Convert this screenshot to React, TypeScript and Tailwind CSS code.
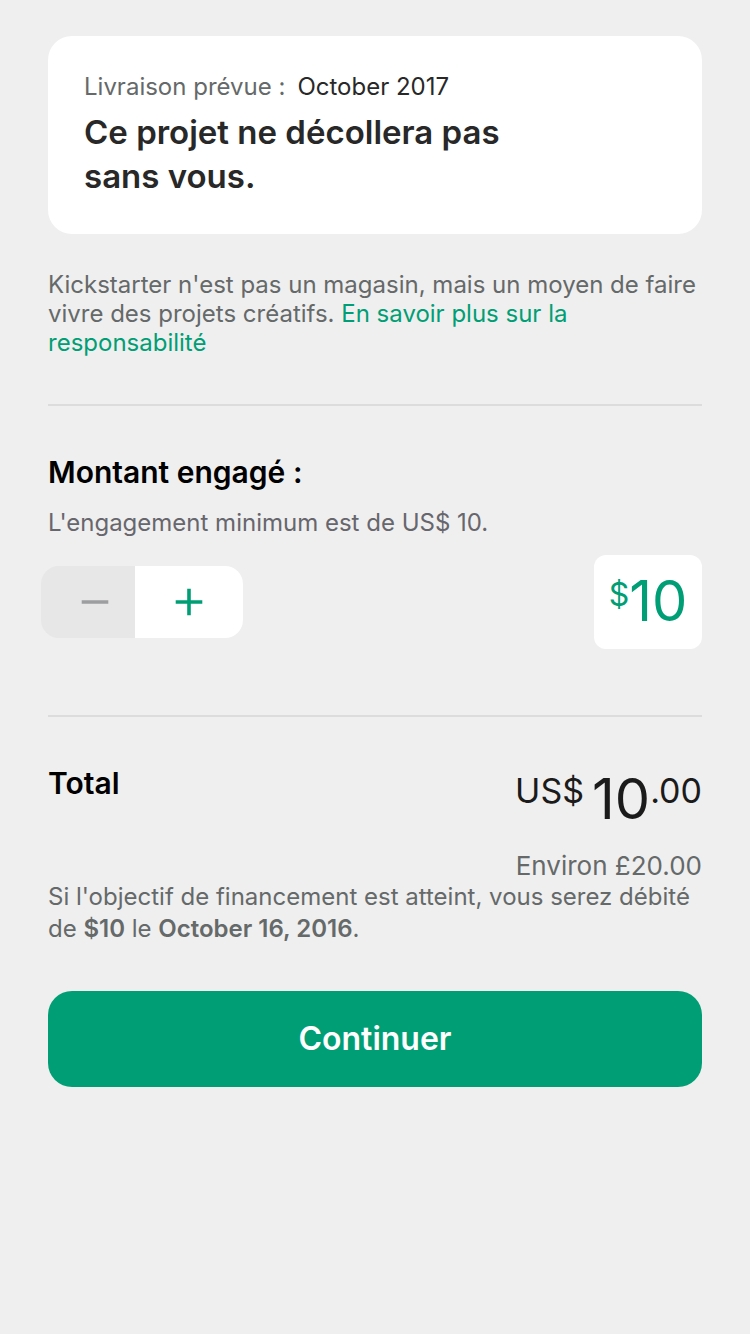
import { useState } from "react";

const MINIMUM = 10;

export default function App() {
  const [amount, setAmount] = useState(MINIMUM);
  return (
    <main className="min-h-screen bg-[#efefef] px-12 pt-9 pb-12 font-['Inter','Liberation_Sans',sans-serif] text-2xl text-[#656969]">
      <section className="rounded-3xl bg-white px-9 pt-9 pb-9">
        <p className="leading-[30px]">
          Livraison prévue :<span className="ml-3 text-[#282828]">October 2017</span>
        </p>
        <h1 className="mt-2 max-w-[440px] text-[33px] leading-[44px] font-semibold text-[#282828]">
          Ce projet ne décollera pas sans vous.
        </h1>
      </section>

      <p className="mt-9 leading-[29px]">
        Kickstarter n'est pas un magasin, mais un moyen de faire vivre des projets créatifs.{" "}
        <a href="#" className="text-[#009e74]">En savoir plus sur la responsabilité</a>
      </p>

      <hr className="mt-[47px] border-t-2 border-[#dcdcdc]" />

      <section className="pt-12">
        <h2 className="text-[30px] leading-[36px] font-semibold text-black">Montant engagé :</h2>
        <p className="mt-[18px] leading-[29px] text-[#67666d]">L'engagement minimum est de US$ 10.</p>
        <div className="mt-[18px] flex items-center justify-between">
          <div className="-ml-[7px] flex h-[72px] overflow-hidden rounded-[18px]">
            <button
              type="button"
              aria-label="Diminuer"
              disabled={amount <= MINIMUM}
              onClick={() => setAmount(amount - 1)}
              className="flex w-[94px] items-center justify-center bg-[#e7e7e7] pl-[14px] text-[#9c9ea0]"
            >
              <svg width="28" height="28" viewBox="0 0 28 28" fill="none" stroke="currentColor" strokeWidth="3.6">
                <path d="M0.7 14H27.3" />
              </svg>
            </button>
            <button
              type="button"
              aria-label="Augmenter"
              onClick={() => setAmount(amount + 1)}
              className="flex w-[108px] items-center justify-center bg-white text-[#009e74]"
            >
              <svg width="28" height="28" viewBox="0 0 28 28" fill="none" stroke="currentColor" strokeWidth="3.6">
                <path d="M0.7 14H27.3M14 0.7V27.3" />
              </svg>
            </button>
          </div>
          <div className="flex h-[94px] min-w-[108px] items-start justify-center rounded-xl bg-white px-3 pt-3 text-[#009e74]">
            <span className="pt-2 text-[32px] leading-[40px]">$</span>
            <span className="text-[56px] leading-[68px]">{amount}</span>
          </div>
        </div>
      </section>

      <hr className="mt-[66px] border-t-2 border-[#dcdcdc]" />

      <section className="pt-12">
        <div className="flex items-start justify-between">
          <h2 className="text-[30px] leading-[36px] font-semibold text-black">Total</h2>
          <p className="flex items-start text-[#1b1b1b]">
            <span className="pt-[6px] text-[34px] leading-[40px]">US$</span>
            <span className="ml-2 text-[56px] leading-[68px]">{amount}</span>
            <span className="pt-[6px] text-[34px] leading-[40px]">.00</span>
          </p>
        </div>
        <p className="mt-[18px] text-right text-[26px] leading-[30px]">Environ £20.00</p>
        <p className="leading-[32px]">
          Si l'objectif de financement est atteint, vous serez débité de{" "}
          <b className="font-semibold">{`$${amount}`}</b> le{" "}
          <b className="font-semibold">October 16, 2016</b>.
        </p>
        <button type="button" className="mt-[46px] h-24 w-full rounded-3xl bg-[#009e74] text-[32px] font-semibold text-white">
          Continuer
        </button>
      </section>
    </main>
  );
}
